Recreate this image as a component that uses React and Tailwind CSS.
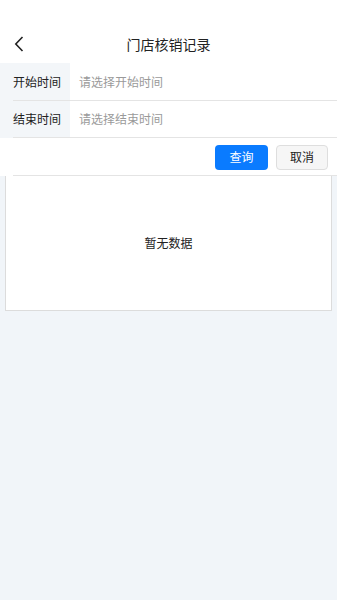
import React from "react";

const fields = [
  { label: "开始时间", placeholder: "请选择开始时间" },
  { label: "结束时间", placeholder: "请选择结束时间" },
];

const App = () => {
  return (
    <div
      className="min-h-[600px] w-full bg-[#f1f5f9] flex flex-col"
      style={{ fontFamily: '"Noto Sans CJK SC", "Noto Sans", sans-serif' }}
    >
      {/* header */}
      <div className="bg-white pt-[25px]">
        <div className="relative h-[38px] flex items-center justify-center">
          <button className="absolute left-[10px] top-0 h-full flex items-center px-1">
            <svg width="10" height="16" viewBox="0 0 10 16" fill="none">
              <path d="M8.5 1 L1.8 8 L8.5 15" stroke="#222" strokeWidth="1.6" />
            </svg>
          </button>
          <div className="text-[14px] text-[#222]">门店核销记录</div>
        </div>
      </div>

      {/* form */}
      <div className="bg-white">
        {fields.map((f) => (
          <div
            key={f.label}
            className="relative flex h-[37.5px] after:absolute after:left-[13px] after:right-0 after:bottom-0 after:h-px after:bg-[#e4e4e4]"
          >
            <div className="w-[70px] bg-[#f3f6f9] flex items-center pl-[13px] text-[12px] text-[#222]">
              {f.label}
            </div>
            <div className="flex-1 flex items-center pl-[9px] text-[12px] text-[#9a9a9a]">
              {f.placeholder}
            </div>
          </div>
        ))}
        <div className="relative flex justify-end items-center gap-2 h-[38px] pr-[9px] after:absolute after:left-[13px] after:right-0 after:bottom-0 after:h-px after:bg-[#e4e4e4]">
          <button className="w-[53px] h-[25px] rounded-[4px] bg-[#0a7bff] text-white text-[12px] flex items-center justify-center">
            查询
          </button>
          <button className="w-[52px] h-[25px] rounded-[4px] bg-[#f6f6f6] border border-[#dedede] text-[#222] text-[12px] flex items-center justify-center">
            取消
          </button>
        </div>
      </div>

      {/* list */}
      <div className="mx-[5px] h-[135px] bg-white border-x border-b border-[#dcdcdc] flex items-center justify-center text-[12px] text-[#222]">
        暂无数据
      </div>
    </div>
  );
};

export default App;
